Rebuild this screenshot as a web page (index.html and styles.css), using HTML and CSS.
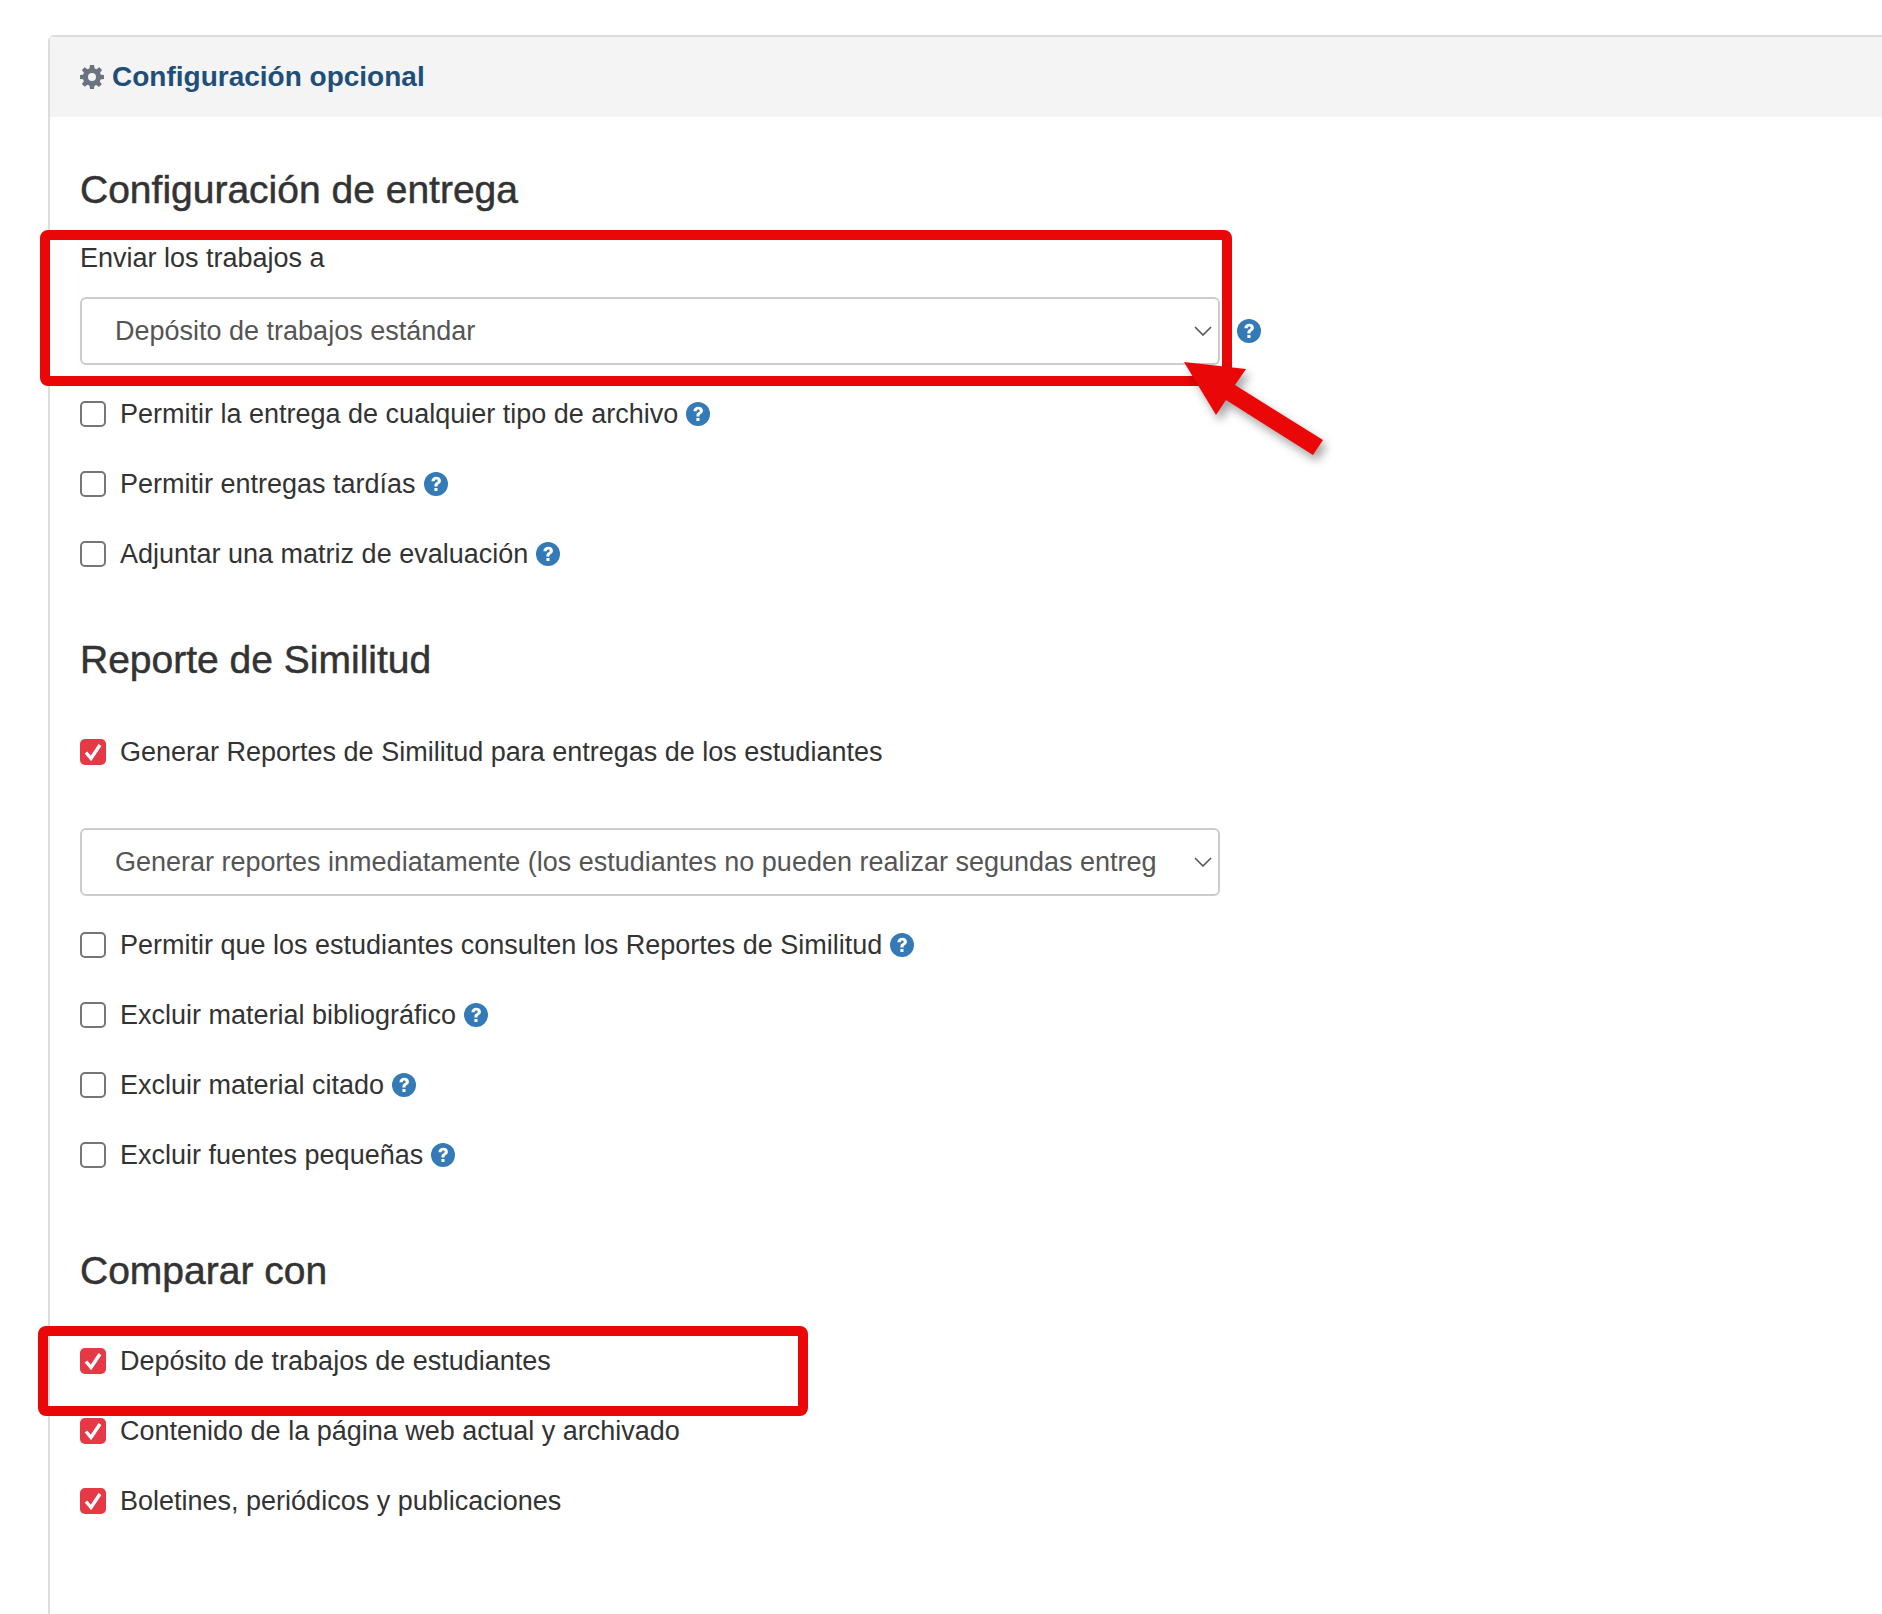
FILE: index.html
```html
<!DOCTYPE html>
<html lang="es">
<head>
<meta charset="utf-8">
<title>Configuración opcional</title>
<link rel="stylesheet" href="styles.css">
</head>
<body>
<svg class="defs" width="0" height="0" aria-hidden="true">
  <symbol id="help" viewBox="0 0 24 24">
    <circle cx="12" cy="12" r="12" fill="#337ab7"/>
    <path d="M7.4 9.2C7.6 6.4 9.5 4.8 12.3 4.8c2.7 0 4.6 1.6 4.6 3.9 0 1.7-.9 2.6-2.1 3.4-1 .7-1.3 1-1.3 1.9v.4h-3.1v-.7c0-1.6.6-2.4 1.8-3.2 1-.7 1.5-1.1 1.5-1.8s-.6-1.2-1.4-1.2c-1 0-1.5.6-1.6 1.7z" fill="#fff"/>
    <rect x="10.4" y="16" width="3.1" height="3.1" rx=".4" fill="#fff"/>
  </symbol>
  <symbol id="tick" viewBox="0 0 26 26">
    <path d="M6 13.5l5 6L20 6" fill="none" stroke="#fff" stroke-width="3.4"/>
  </symbol>
  <symbol id="chev" viewBox="0 0 18 10">
    <path d="M1 1l8 8 8-8" fill="none" stroke="#555" stroke-width="1.6"/>
  </symbol>
</svg>

<section class="panel">
  <header class="panel-head">
    <svg class="gear" viewBox="0 0 24 24" aria-hidden="true"><path fill-rule="evenodd" fill="#6b7280" d="M10 0h4l.6 3.4 1.9.8L19.300 2.200l2.800 2.800-2 2.800.8 1.900 3.100.3v4l-3.400.6-.8 1.900 2 2.800-2.800 2.800-2.800-2-1.900.8L14 24h-4l-.6-3.400-1.900-.8-2.800 2L1.900 19l2-2.800-.8-1.900L0 14v-4l3.100-.3.800-1.900-2-2.800L4.700 2.200l2.800 2 1.900-.8zM12 8a4 4 0 1 0 0 8 4 4 0 0 0 0-8z"/></svg>
    <span>Configuración opcional</span>
  </header>
  <div class="panel-body">
    <h2 class="heading first">Configuración de entrega</h2>
    <label class="field-label">Enviar los trabajos a</label>
    <div class="select-row">
      <div class="select"><span class="select-text">Depósito de trabajos estándar</span><svg class="chev"><use href="#chev"/></svg></div>
      <svg class="help"><use href="#help"/></svg>
    </div>
    <ul class="checks">
      <li><span class="box"></span>Permitir la entrega de cualquier tipo de archivo<svg class="help"><use href="#help"/></svg></li>
      <li><span class="box"></span>Permitir entregas tardías<svg class="help"><use href="#help"/></svg></li>
      <li><span class="box"></span>Adjuntar una matriz de evaluación<svg class="help"><use href="#help"/></svg></li>
    </ul>

    <h2 class="heading second">Reporte de Similitud</h2>
    <ul class="checks single">
      <li><span class="box on"><svg><use href="#tick"/></svg></span>Generar Reportes de Similitud para entregas de los estudiantes</li>
    </ul>
    <div class="select-row lone">
      <div class="select"><span class="select-text">Generar reportes inmediatamente (los estudiantes no pueden realizar segundas entregas)</span><svg class="chev"><use href="#chev"/></svg></div>
    </div>
    <ul class="checks">
      <li><span class="box"></span>Permitir que los estudiantes consulten los Reportes de Similitud<svg class="help"><use href="#help"/></svg></li>
      <li><span class="box"></span>Excluir material bibliográfico<svg class="help"><use href="#help"/></svg></li>
      <li><span class="box"></span>Excluir material citado<svg class="help"><use href="#help"/></svg></li>
      <li><span class="box"></span>Excluir fuentes pequeñas<svg class="help"><use href="#help"/></svg></li>
    </ul>

    <h2 class="heading third">Comparar con</h2>
    <ul class="checks compare">
      <li><span class="box on"><svg><use href="#tick"/></svg></span>Depósito de trabajos de estudiantes</li>
      <li><span class="box on"><svg><use href="#tick"/></svg></span>Contenido de la página web actual y archivado</li>
      <li><span class="box on"><svg><use href="#tick"/></svg></span>Boletines, periódicos y publicaciones</li>
    </ul>
  </div>
</section>

<div class="mark mark-one"></div>
<div class="mark mark-two"></div>
<svg class="arrow" viewBox="0 0 1882 1614" aria-hidden="true"><polygon points="1184,362 1246,369 1235,385 1323,440 1313,455 1226,400 1216,415" fill="#ea0707"/></svg>
</body>
</html>
```
FILE: styles.css
```css
html, body { margin: 0; padding: 0; }
body {
  position: relative;
  width: 1882px;
  height: 1614px;
  overflow: hidden;
  background: #fff;
  color: #333;
  font-family: "Liberation Sans", Arial, sans-serif;
  font-size: 27px;
}
.defs { position: absolute; }
.panel {
  box-sizing: border-box;
  margin: 35px -20px 0 48px;
  height: 1620px;
  border: 2px solid #ddd;
  border-radius: 6px 0 0 0;
}
.panel-head {
  display: flex;
  align-items: center;
  gap: 8px;
  height: 80px;
  padding-left: 30px;
  background: #f4f4f4;
  color: #1f4e79;
  font-size: 28px;
  font-weight: 700;
}
.gear { width: 24px; height: 24px; }
.panel-body { padding-left: 30px; }
.heading {
  margin: 0;
  font-size: 39px;
  line-height: 50px;
  font-weight: 400;
  -webkit-text-stroke: .5px #333;
}
.heading.first { padding-top: 48px; }
.heading.second { margin-top: 46px; }
.heading.third { margin-top: 56px; }
.field-label { display: block; margin-top: 23px; line-height: 40px; }
.select-row { display: flex; align-items: center; gap: 17px; margin-top: 19px; }
.select-row.lone { margin-top: 41px; }
.select {
  box-sizing: border-box;
  display: flex;
  align-items: center;
  justify-content: space-between;
  width: 1140px;
  height: 68px;
  padding: 0 6px 0 33px;
  border: 2px solid #ccc;
  border-radius: 6px;
  color: #555;
}
.select-text { width: 1041px; overflow: hidden; white-space: nowrap; }
.chev { width: 18px; height: 10px; }
.help { width: 24px; height: 24px; flex: none; }
.checks { list-style: none; margin: 14px 0 0; padding: 0; }
.checks.single { margin-top: 32px; }
.checks.compare { margin-top: 30px; }
.checks li { display: flex; align-items: center; height: 70px; }
.checks li .help { margin-left: 8px; }
.box {
  box-sizing: border-box;
  flex: none;
  width: 26px;
  height: 26px;
  margin-right: 14px;
  border: 2px solid #767676;
  border-radius: 5px;
  background: #fff;
}
.box.on { border: 0; background: #e63946; }
.box svg { display: block; width: 26px; height: 26px; }
.mark {
  position: absolute;
  box-sizing: border-box;
  border: 10px solid #ea0707;
  border-radius: 8px;
}
.mark-one { left: 40px; top: 230px; width: 1192px; height: 156px; }
.mark-two { left: 38px; top: 1326px; width: 770px; height: 90px; }
.arrow {
  position: absolute;
  left: 0;
  top: 0;
  width: 1882px;
  height: 1614px;
  filter: drop-shadow(4px 6px 5px rgba(0,0,0,.35));
}
```
